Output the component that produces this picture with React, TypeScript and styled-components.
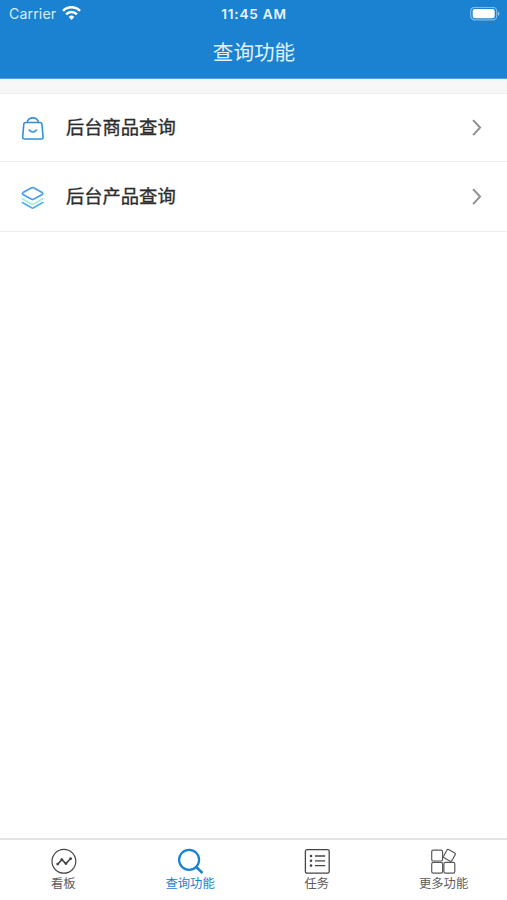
import React from "react";
import styled, { createGlobalStyle } from "styled-components";

const GlobalStyle = createGlobalStyle`
  * { box-sizing: border-box; }
  body {
    margin: 0;
    background: #fff;
    font-family: Inter, "Noto Sans CJK SC", sans-serif;
  }
`;

const Screen = styled.div`
  width: 100%;
  height: 100vh;
  display: flex;
  flex-direction: column;
  background: #fff;
`;

const Header = styled.header`
  height: 79px;
  flex: none;
  background: #1b82d2;
  border-bottom: 1px solid #50a3df;
  color: #fff;
`;

const StatusBar = styled.div`
  height: 27px;
  padding: 0 7px 0 9px;
  display: grid;
  grid-template-columns: 1fr auto 1fr;
  align-items: center;
  font-size: 14px;
`;

const Carrier = styled.div`
  display: flex;
  align-items: center;
  gap: 6px;
  color: #d9edfb;
  font-size: 14.2px;
  letter-spacing: 0.1px;
`;

const Clock = styled.div`
  color: #e8f4fd;
  font-size: 13.6px;
  font-weight: 600;
  letter-spacing: 0.8px;
  margin-right: 1px;
`;

const Battery = styled.div`
  display: flex;
  justify-content: flex-end;
`;

const Title = styled.h1`
  margin: 0;
  height: 48px;
  display: flex;
  align-items: center;
  justify-content: center;
  padding-left: 1px;
  font-family: "Noto Sans CJK SC", sans-serif;
  font-size: 20.6px;
  font-weight: 400;
  color: #e0f1fd;
`;

const Content = styled.main`
  flex: 1;
  padding-top: 14px;
  background: linear-gradient(#f7f7f7 14px, #fff 14px);
`;

const Row = styled.div<{ $height: number }>`
  height: ${(p) => p.$height}px;
  display: flex;
  align-items: center;
  padding: 0 25px 0 21px;
  border-bottom: 1px solid #ececec;

  &:first-child {
    border-top: 1px solid #f0f0f0;
  }
`;

const RowIcon = styled.span`
  display: flex;
  width: 24px;
  height: 24px;
  margin: 3px 21px 0 0;
`;

const RowLabel = styled.span`
  flex: 1;
  padding-bottom: 3px;
  font-family: "Noto Sans CJK SC", sans-serif;
  font-size: 18.3px;
  font-weight: 400;
  -webkit-text-stroke: 0.35px #2c2c2c;
  line-height: 28px;
  color: #2c2c2c;
`;

const TabBar = styled.nav`
  height: 62px;
  flex: none;
  display: grid;
  grid-template-columns: repeat(4, 1fr);
  border-top: 2px solid #e2e2e2;
  background: #fff;
`;

const Tab = styled.div<{ $active?: boolean }>`
  display: flex;
  flex-direction: column;
  align-items: center;
  padding-top: 7px;
  color: ${(p) => (p.$active ? "#1b82d2" : "#5c5c5c")};
`;

const TabLabel = styled.span`
  font-family: "Noto Sans CJK SC", sans-serif;
  font-size: 12.3px;
  line-height: 16px;
`;

const WifiIcon = () => (
  <svg width="19" height="15" viewBox="0 0 19 15">
    <g fill="none" stroke="#fff" strokeWidth="2.5">
      <path d="M1 4.9a12 12 0 0 1 17 0" />
      <path d="M4.1 8.3a7.6 7.6 0 0 1 10.8 0" />
    </g>
    <path d="M9.5 13.9 6.7 10.9a4.1 4.1 0 0 1 5.6 0z" fill="#fff" />
  </svg>
);

const BatteryIcon = () => (
  <svg width="30" height="14" viewBox="0 0 30 14">
    <rect x="0.7" y="0.3" width="26" height="12.6" rx="3.8" fill="none" stroke="#7dbbe8" strokeWidth="1.2" />
    <rect x="2.7" y="2" width="22" height="9.2" rx="2.2" fill="#fff" />
    <path d="M28 4.4c2 .8 2 3.6 0 4.4z" fill="#8ec5eb" />
  </svg>
);

const BagIcon = () => (
  <svg width="24" height="24" viewBox="0 0 24 24" fill="none" stroke="#3190dc" strokeWidth="1.6" strokeLinecap="round" strokeLinejoin="round">
    <path d="M4.5 5.5h14.7q1.5 0 1.7 1.5l1.2 13q.1 2-1.8 2H3.5q-1.9 0-1.8-2L2.8 7q.2-1.5 1.7-1.5z" />
    <path d="M6.3 5.4a5.5 4.5 0 0 1 11 0" />
    <path d="M8.1 13q3.7 4.1 7.4 0" />
  </svg>
);

const LayersIcon = () => (
  <svg width="24" height="24" viewBox="0 0 24 24" fill="none" strokeWidth="1.7" strokeLinecap="round" strokeLinejoin="round">
    <path d="m1.3 12.7 9.3 5.3q1 .5 2 0l9.3-5.3" stroke="#a7ebdc" />
    <path d="M10.6 1.8q1-.5 2 0L21.2 6.6q1.3.9 0 1.8l-8.6 4.8q-1 .5-2 0L2 8.4q-1.3-.9 0-1.8z" stroke="#4a9dec" />
    <path d="m1.4 16.6 9.2 5.2q1 .5 2 0l9.2-5.2" stroke="#4faeea" />
  </svg>
);

const ChevronIcon = () => (
  <svg width="10" height="18" viewBox="0 0 10 18" fill="none" stroke="#929292" strokeWidth="2.1">
    <path d="M1.1 1.1 8 8.6l-6.9 7.5" />
  </svg>
);

const BoardIcon = () => (
  <svg width="28" height="28" viewBox="0 0 28 28" fill="none" stroke="#454545" strokeWidth="1.2">
    <g transform="translate(.9 0)">
      <circle cx="14" cy="14.3" r="11.9" />
      <path d="m8 17 3.9-4.3 4.1 3.9 4.6-4.8" strokeWidth="1.6" />
      <g fill="#454545" stroke="none">
        <circle cx="7.8" cy="17.1" r="1.4" />
        <circle cx="11.9" cy="12.6" r="1.4" />
        <circle cx="16" cy="16.6" r="1.4" />
        <circle cx="20.7" cy="11.7" r="1.4" />
      </g>
    </g>
  </svg>
);

const SearchIcon = () => (
  <svg width="28" height="28" viewBox="0 0 28 28" fill="none" stroke="#1b82d2" strokeWidth="2.2">
    <circle cx="13.1" cy="12.8" r="10" />
    <path d="m20.2 20 6.3 6" strokeWidth="2.5" />
  </svg>
);

const TaskIcon = () => (
  <svg width="28" height="28" viewBox="0 0 28 28" fill="none" stroke="#454545" strokeWidth="1.3">
    <rect x="2.4" y="2.6" width="23.8" height="23.6" rx="1.7" />
    <path d="M12 9h10.2M12 13.8h10.2M12 18.6h10.2" />
    <g fill="#454545" stroke="none">
      <circle cx="8" cy="9" r="1.3" />
      <circle cx="8" cy="13.8" r="1.3" />
      <circle cx="8" cy="18.6" r="1.3" />
    </g>
  </svg>
);

const MoreIcon = () => (
  <svg width="28" height="28" viewBox="0 0 28 28" fill="none" stroke="#5a5a5a" strokeWidth="1.2">
    <rect x="1.7" y="3.1" width="10.9" height="10.9" rx="1.6" />
    <rect x="1.7" y="15.3" width="10.9" height="10.9" rx="1.6" />
    <rect x="13.9" y="15.3" width="10.9" height="10.9" rx="1.6" />
    <rect x="14.7" y="3.7" width="9.4" height="9.4" rx="1.2" transform="rotate(29 19.4 8.4)" />
  </svg>
);

const rows = [
  { label: "后台商品查询", Icon: BagIcon, height: 69 },
  { label: "后台产品查询", Icon: LayersIcon, height: 70 },
];

const tabs = [
  { label: "看板", Icon: BoardIcon },
  { label: "查询功能", Icon: SearchIcon, active: true },
  { label: "任务", Icon: TaskIcon },
  { label: "更多功能", Icon: MoreIcon },
];

export default function App() {
  return (
    <>
      <GlobalStyle />
      <Screen>
        <Header>
          <StatusBar>
            <Carrier>Carrier <WifiIcon /></Carrier>
            <Clock>11:45 AM</Clock>
            <Battery><BatteryIcon /></Battery>
          </StatusBar>
          <Title>查询功能</Title>
        </Header>
        <Content>
          {rows.map(({ label, Icon, height }) => (
            <Row key={label} $height={height}>
              <RowIcon><Icon /></RowIcon>
              <RowLabel>{label}</RowLabel>
              <ChevronIcon />
            </Row>
          ))}
        </Content>
        <TabBar>
          {tabs.map(({ label, Icon, active }) => (
            <Tab key={label} $active={active}>
              <Icon />
              <TabLabel>{label}</TabLabel>
            </Tab>
          ))}
        </TabBar>
      </Screen>
    </>
  );
}
